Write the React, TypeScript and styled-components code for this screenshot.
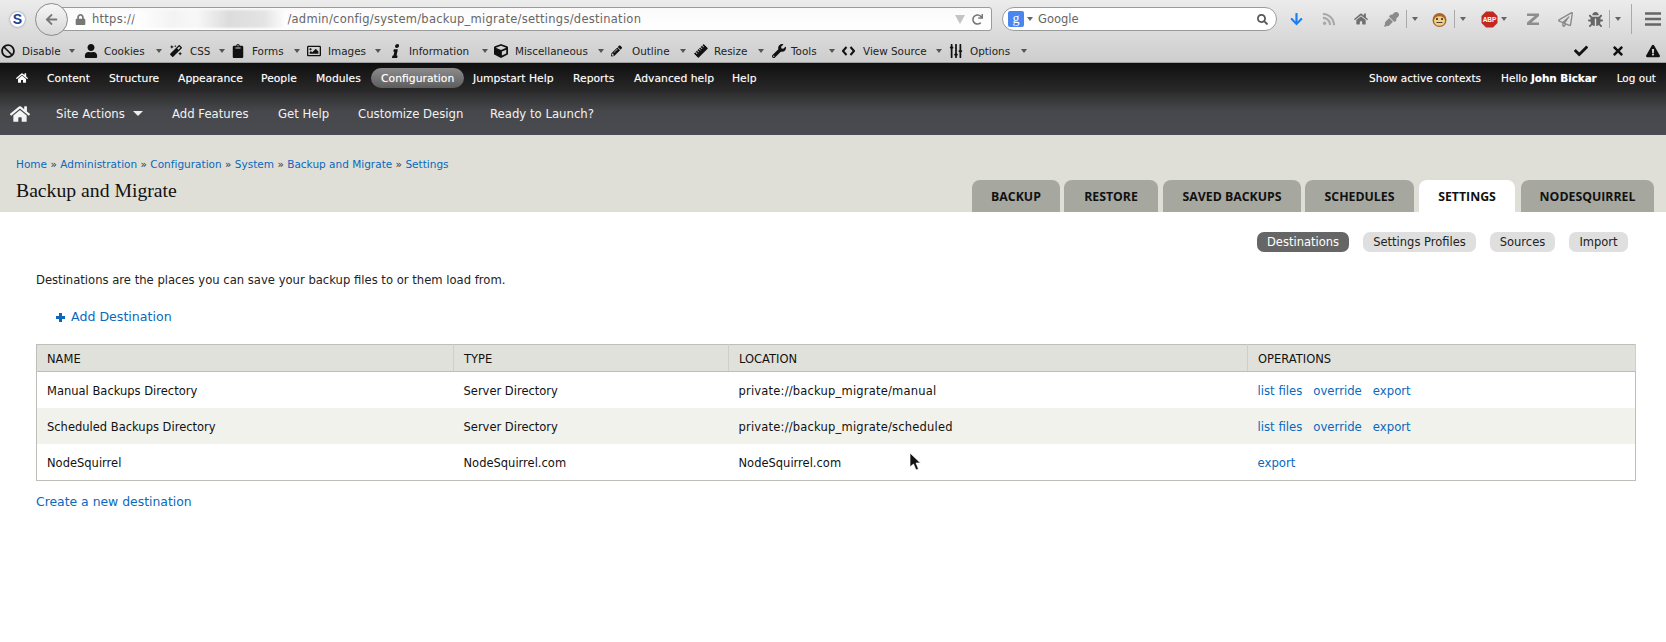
import React from 'react';
import styled, { createGlobalStyle } from 'styled-components';
import {
  FaBan, FaUser, FaMagic, FaClipboard, FaRegImage, FaInfo, FaCube, FaPencilAlt, FaRulerHorizontal,
  FaWrench, FaSlidersH, FaCheck, FaTimes, FaExclamationTriangle, FaHome, FaArrowDown, FaRss,
  FaEyeDropper, FaSearch, FaLock, FaArrowLeft, FaRedo, FaRegPaperPlane, FaBug,
} from 'react-icons/fa';

const Global = createGlobalStyle`
  html, body { margin: 0; padding: 0; background: #fff; }
  body { width: 1666px; height: 642px; overflow: hidden; font-family: "DejaVu Sans", sans-serif; color: #222; }
  a { color: #0a68bd; text-decoration: none; }
`;

const Page = styled.div`position: relative; width: 1666px; height: 642px; overflow: hidden;`;

const Chrome = styled.div`
  height: 63px;
  background: linear-gradient(#ececec, #cdcdcd);
  border-bottom: 1px solid #a0a0a0;
  box-sizing: border-box;
  display: flex;
  flex-direction: column;
`;
const UrlRow = styled.div`height: 38px; display: flex; align-items: center; position: relative; color: #666;`;
const SyncLogo = styled.div`
  width: 15px; height: 15px; margin-left: 10px; border-radius: 50%; background: #fff; color: #1c3f94;
  font: 900 14px/15px "Liberation Sans", sans-serif; text-align: center; box-shadow: 0 0 2px #668;
`;
const BackButton = styled.div`
  width: 31px; height: 31px; margin-left: 10px; border-radius: 50%; border: 1px solid #8a8a8a; z-index: 1;
  background: linear-gradient(#f6f6f6, #d8d8d8); display: flex; align-items: center; justify-content: center;
  color: #777; font-size: 13px; flex: none;
`;
const UrlBar = styled.div`
  width: 932px; height: 24px; margin-left: -8px; box-sizing: border-box; border: 1px solid #9b9b9b; border-radius: 3px;
  background: linear-gradient(#fafafa, #fff); display: flex; align-items: center; padding-left: 14px; font-size: 11.5px;
  color: #666; flex: none;
`;
const UrlText = styled.span<{ $flush?: boolean }>`margin-left: ${p => p.$flush ? 0 : 6}px; letter-spacing: .27px; white-space: nowrap;`;
const Redacted = styled.span`
  width: 152px; height: 18px; flex: none;
  background: linear-gradient(90deg, #fff 0, #f3f3f3 25%, #f8f8f8 40%, #dcdcdc 62%, #e4e4e4 85%, #fff 100%);
  filter: blur(1px);
`;
const Spacer = styled.div`flex: 1;`;
const Marker = styled.span`
  width: 0; height: 0; border-left: 5px solid transparent; border-right: 5px solid transparent;
  border-top: 9px solid #c4c4c4; margin-right: 7px;
`;
const SearchBar = styled.div`
  width: 275px; height: 24px; margin-left: 10px; box-sizing: border-box; border: 1px solid #9b9b9b; border-radius: 12px;
  background: #fff; display: flex; align-items: center; padding: 0 8px 0 5px; font-size: 11.5px; color: #666; flex: none;
`;
const GoogleBadge = styled.span`
  width: 16px; height: 16px; border-radius: 2px; background: #4b85f0; color: #fff; text-align: center;
  font: 14px/16px "Liberation Serif", serif; flex: none;
`;
const TinyCaret = styled.span<{ $color?: string; $m?: string }>`
  width: 0; height: 0; border-left: 3px solid transparent; border-right: 3px solid transparent;
  border-top: 4px solid ${p => p.$color || '#666'}; margin: ${p => p.$m || '0'}; flex: none;
`;
const AddonSlot = styled.span<{ $w: number; $c?: string; $s?: number; $ml?: number }>`
  width: ${p => p.$w}px; flex: none; display: flex; align-items: center; color: ${p => p.$c || '#8b8b8b'};
  font-size: ${p => p.$s || 15}px; margin-left: ${p => p.$ml || 0}px;
`;
const AddonRule = styled.span<{ $h?: number; $m?: string }>`
  width: 1px; height: ${p => p.$h || 18}px; background: #aaa; margin: ${p => p.$m || '0 5px'}; flex: none;
`;

const DevBar = styled.div`height: 24px; display: flex; align-items: center; font-size: 10.4px; color: #222; padding-left: 1px; padding-top: 1px; box-sizing: border-box;`;
const DevItem = styled.div<{ $w: number }>`width: ${p => p.$w}px; flex: none; display: flex; align-items: center; white-space: nowrap;`;
const DevIcon = styled.span<{ $w: number; $gap: number }>`
  width: ${p => p.$w}px; margin-right: ${p => p.$gap}px; flex: none; display: flex; justify-content: center; color: #111; font-size: 14px;
`;
const DevLabel = styled.span<{ $w: number }>`width: ${p => p.$w}px; flex: none;`;
const DevRight = styled.div`margin-left: auto; display: flex; align-items: center; color: #111; font-size: 14px; padding-right: 6px;`;
const DevRightSlot = styled.span<{ $w: number }>`width: ${p => p.$w}px; display: flex; flex: none;`;
const RulerIcon = styled(FaRulerHorizontal)`transform: rotate(-45deg);`;
const SlidersIcon = styled(FaSlidersH)`transform: rotate(90deg);`;
const InfoIcon = styled(FaInfo)`transform: skewX(-12deg);`;

const AdminBar = styled.div`
  height: 29px; background: linear-gradient(#0f0f0f, #2a2a2a); color: #fff; display: flex; align-items: center;
  font-size: 10.8px; padding: 1px 10px 0 16px; box-sizing: border-box; text-shadow: 0 0 1px rgba(255,255,255,.4);
`;
const AdminHome = styled.span`width: 31px; font-size: 12px; display: flex; flex: none;`;
const AdminItem = styled.span<{ $w: number; $active?: boolean }>`
  width: ${p => p.$w}px; flex: none; white-space: nowrap; display: flex; align-items: center;
  ${p => p.$active ? `
    height: 20px; padding-left: 10px; margin-right: 9px; border-radius: 10px;
    background: linear-gradient(#8c8c8c, #5d5d5d);
  ` : ''}
`;
const AdminRight = styled.div`margin-left: auto; display: flex; gap: 20px; font-size: 10.5px;`;
const Strong = styled.strong`font-weight: 700; letter-spacing: -.1px;`;

const SiteBar = styled.div`
  height: 43px; background: linear-gradient(#2d2d2f, #47484c 45%, #4a4b50); color: #f2f2f2; display: flex; align-items: center;
  font-size: 11.7px; padding-left: 10px;
`;
const SiteHome = styled.span`width: 46px; font-size: 20px; display: flex; flex: none; color: #f4f4f4;`;
const SiteItem = styled.span<{ $w: number }>`width: ${p => p.$w}px; flex: none; white-space: nowrap; display: flex; align-items: center;`;
const SiteCaret = styled.span`
  width: 0; height: 0; border-left: 5px solid transparent; border-right: 5px solid transparent; border-top: 5px solid #eee; margin-left: 8px;
`;

const Header = styled.div`
  height: 77px; background: #dfdfd7; box-sizing: border-box; padding: 0 12px 0 16px; display: flex; align-items: flex-end; justify-content: space-between;
`;
const HeaderLeft = styled.div`padding-bottom: 11px;`;
const Crumbs = styled.div`font-size: 10.5px; line-height: 14px; color: #333; margin-bottom: 8px; white-space: nowrap; letter-spacing: .01px;`;
const Title = styled.h1`font: 400 19.7px/22px "Liberation Serif", serif; color: #111; margin: 0;`;
const Tabs = styled.div`display: flex;`;
const Tab = styled.div<{ $w: number; $ml?: number; $active?: boolean }>`
  width: ${p => p.$w}px; margin-left: ${p => p.$ml || 0}px; height: 32px; box-sizing: border-box; border-radius: 8px 8px 0 0; text-align: center;
  font: 700 12.3px/33px "Open Sans", sans-serif; color: #111; background: ${p => p.$active ? '#fff' : '#a6a79f'};
`;

const Content = styled.div`padding: 20px 30px 0 36px;`;
const Pills = styled.div`display: flex; justify-content: flex-end; gap: 14px; padding-right: 8px;`;
const Pill = styled.div<{ $w: number; $active?: boolean }>`
  width: ${p => p.$w}px; height: 20px; border-radius: 7px; text-align: center; font-size: 11.5px; line-height: 20px;
  background: ${p => p.$active ? '#666' : '#dfdfdf'}; color: ${p => p.$active ? '#fff' : '#222'};
`;
const Intro = styled.p`margin: 19px 0 0; font-size: 11.6px; line-height: 18px; color: #222;`;
const AddLink = styled.a`
  display: flex; align-items: center; margin: 19px 0 0 20px; font-size: 12.6px; line-height: 18px;
`;
const PlusIcon = styled.svg`margin-right: 6px; flex: none;`;
const Table = styled.table`
  width: 1600px; margin-top: 18px; border-collapse: collapse; table-layout: fixed; font-size: 11.5px; border: 1px solid #bdbeb8;
`;
const Th = styled.th<{ $w?: number }>`
  ${p => p.$w ? `width: ${p.$w}px;` : ''}
  height: 27px; box-sizing: border-box; padding: 2px 10px 0; text-align: left; font-weight: 400; background: #e1e1db; color: #111;
  border-bottom: 1px solid #bdbeb8; border-right: 1px solid #cfcfc9;
`;
const Tr = styled.tr<{ $even?: boolean }>`background: ${p => p.$even ? '#f2f2ed' : '#fff'};`;
const Td = styled.td<{ $path?: boolean; $tall?: boolean }>`
  height: ${p => p.$tall ? 37 : 36}px; padding: ${p => p.$tall ? 3 : 2}px 10px 0; color: #111; box-sizing: border-box;
  letter-spacing: ${p => p.$path ? '.2px' : '0'};
`;
const Ops = styled.div`display: flex; gap: 11px; font-size: 11.7px;`;
const Create = styled.a`display: block; margin-top: 12px; font-size: 12.4px; line-height: 18px;`;
const Cursor = styled.svg`position: absolute; left: 909px; top: 452px;`;

const CodeGlyph = () => (
  <svg width="13" height="10" viewBox="0 0 13 10"><path d="M4.500 1 1 5l3.500 4M8.500 1 12 5 8.500 9" fill="none" stroke="#111" strokeWidth="2" /></svg>
);

const devItems = [
  { w: 82, i: <FaBan />, iw: 14, gap: 7, l: 'Disable', lw: 47 },
  { w: 87, i: <FaUser />, iw: 15, gap: 6, l: 'Cookies', lw: 52 },
  { w: 62, i: <FaMagic />, iw: 12, gap: 8, l: 'CSS', lw: 29 },
  { w: 75, i: <FaClipboard />, iw: 12, gap: 8, l: 'Forms', lw: 42 },
  { w: 85, i: <FaRegImage />, iw: 14, gap: 7, l: 'Images', lw: 47 },
  { w: 102, i: <InfoIcon />, iw: 8, gap: 9, l: 'Information', lw: 73 },
  { w: 117, i: <FaCube />, iw: 14, gap: 7, l: 'Miscellaneous', lw: 83 },
  { w: 82, i: <FaPencilAlt />, iw: 11, gap: 10, l: 'Outline', lw: 48 },
  { w: 77, i: <RulerIcon />, iw: 15, gap: 6, l: 'Resize', lw: 44 },
  { w: 72, i: <FaWrench />, iw: 17, gap: 4, l: 'Tools', lw: 38 },
  { w: 107, i: <CodeGlyph />, iw: 13, gap: 8, l: 'View Source', lw: 73 },
  { w: 85, i: <SlidersIcon />, iw: 14, gap: 7, l: 'Options', lw: 51 },
];
const admin: [string, number][] = [
  ['Content', 62], ['Structure', 69], ['Appearance', 83], ['People', 55], ['Modules', 55],
];
const admin2: [string, number][] = [
  ['Jumpstart Help', 100], ['Reports', 61], ['Advanced help', 98], ['Help', 30],
];
const rows = [
  ['Manual Backups Directory', 'Server Directory', 'private://backup_migrate/manual', ['list files', 'override', 'export']],
  ['Scheduled Backups Directory', 'Server Directory', 'private://backup_migrate/scheduled', ['list files', 'override', 'export']],
  ['NodeSquirrel', 'NodeSquirrel.com', 'NodeSquirrel.com', ['export']],
] as const;

export default function App() {
  return (
    <Page>
      <Global />
      <Chrome>
        <UrlRow>
          <SyncLogo>S</SyncLogo>
          <BackButton><FaArrowLeft /></BackButton>
          <UrlBar>
            <FaLock size={11} color="#777" />
            <UrlText>https://</UrlText>
            <Redacted />
            <UrlText $flush>/admin/config/system/backup_migrate/settings/destination</UrlText>
            <Spacer />
            <Marker />
            <AddonSlot $w={19} $c="#777" $s={11}><FaRedo /></AddonSlot>
          </UrlBar>
          <SearchBar>
            <GoogleBadge>g</GoogleBadge>
            <TinyCaret $m="0 5px 0 3px" />
            Google
            <Spacer />
            <FaSearch size={11} color="#555" />
          </SearchBar>
          <AddonSlot $w={13} $c="#1d7fee" $s={14} $ml={13}><FaArrowDown /></AddonSlot>
          <AddonSlot $w={14} $c="#a9a9a9" $s={14} $ml={19}><FaRss /></AddonSlot>
          <AddonSlot $w={14} $c="#707070" $s={14} $ml={18}><FaHome /></AddonSlot>
          <AddonSlot $w={17} $ml={16}><FaEyeDropper /></AddonSlot>
          <AddonRule />
          <TinyCaret $m="0 14px 0 0" />
          <AddonSlot $w={15}>
            <svg width="15" height="15" viewBox="0 0 15 15"><circle cx="7.5" cy="8" r="7" fill="#a8642a" /><ellipse cx="7.5" cy="9" rx="5.5" ry="4.8" fill="#f3cf83" /><circle cx="5" cy="7" r="1" fill="#222" /><circle cx="10" cy="7" r="1" fill="#222" /><path d="M4.5 10.5h6" stroke="#444" /></svg>
          </AddonSlot>
          <AddonRule $m="0 5px 0 7px" />
          <TinyCaret $m="0 15px 0 0" />
          <AddonSlot $w={17}>
            <svg width="17" height="17" viewBox="0 0 17 17"><path d="M5 .5h7L16.500 5v7L12 16.500H5L.5 12V5z" fill="#c5281f" /><text x="8.500" y="11" fontSize="6.500" fontWeight="700" fill="#fff" textAnchor="middle" fontFamily="Liberation Sans">ABP</text></svg>
          </AddonSlot>
          <TinyCaret $m="0 19px 0 3px" />
          <AddonSlot $w={14}>
            <svg width="14" height="14" viewBox="0 0 14 14"><path d="M1 1.500h12v2.500l-7.500 6.500H13V13H1v-2.500L8.500 4H1z" fill="#8e8e8e" /></svg>
          </AddonSlot>
          <AddonSlot $w={15} $ml={18}><FaRegPaperPlane /></AddonSlot>
          <AddonSlot $w={16} $ml={15} $c="#666"><FaBug /></AddonSlot>
          <AddonRule />
          <TinyCaret $m="0 10px 0 0" />
          <AddonRule $h={30} $m="0 13px 0 0" />
          <svg width="16" height="14" viewBox="0 0 16 14"><path d="M0 1.500h16M0 7h16M0 12.500h16" stroke="#666" strokeWidth="2.600" /></svg>
        </UrlRow>
        <DevBar>
          {devItems.map(d => (
            <DevItem key={d.l} $w={d.w}>
              <DevIcon $w={d.iw} $gap={d.gap}>{d.i}</DevIcon>
              <DevLabel $w={d.lw}>{d.l}</DevLabel>
              <TinyCaret $color="#555" />
            </DevItem>
          ))}
          <DevRight>
            <DevRightSlot $w={37}><FaCheck /></DevRightSlot>
            <DevRightSlot $w={35}><FaTimes /></DevRightSlot>
            <DevRightSlot $w={14}><FaExclamationTriangle /></DevRightSlot>
          </DevRight>
        </DevBar>
      </Chrome>
      <AdminBar>
        <AdminHome><FaHome /></AdminHome>
        {admin.map(([t, w]) => <AdminItem key={t} $w={w}>{t}</AdminItem>)}
        <AdminItem $w={83} $active>Configuration</AdminItem>
        {admin2.map(([t, w]) => <AdminItem key={t} $w={w}>{t}</AdminItem>)}
        <AdminRight>
          <span>Show active contexts</span>
          <span>Hello <Strong>John Bickar</Strong></span>
          <span>Log out</span>
        </AdminRight>
      </AdminBar>
      <SiteBar>
        <SiteHome><FaHome /></SiteHome>
        <SiteItem $w={116}>Site Actions<SiteCaret /></SiteItem>
        <SiteItem $w={106}>Add Features</SiteItem>
        <SiteItem $w={80}>Get Help</SiteItem>
        <SiteItem $w={132}>Customize Design</SiteItem>
        <SiteItem $w={110}>Ready to Launch?</SiteItem>
      </SiteBar>
      <Header>
        <HeaderLeft>
          <Crumbs>
            <a href="#">Home</a> » <a href="#">Administration</a> » <a href="#">Configuration</a> » <a href="#">System</a> » <a href="#">Backup and Migrate</a> » <a href="#">Settings</a>
          </Crumbs>
          <Title>Backup and Migrate</Title>
        </HeaderLeft>
        <Tabs>
          <Tab $w={88}>BACKUP</Tab>
          <Tab $w={94} $ml={4}>RESTORE</Tab>
          <Tab $w={138} $ml={5}>SAVED BACKUPS</Tab>
          <Tab $w={109} $ml={4}>SCHEDULES</Tab>
          <Tab $w={96} $ml={5} $active>SETTINGS</Tab>
          <Tab $w={133} $ml={6}>NODESQUIRREL</Tab>
        </Tabs>
      </Header>
      <Content>
        <Pills>
          <Pill $w={92} $active>Destinations</Pill>
          <Pill $w={113}>Settings Profiles</Pill>
          <Pill $w={65}>Sources</Pill>
          <Pill $w={59}>Import</Pill>
        </Pills>
        <Intro>Destinations are the places you can save your backup files to or them load from.</Intro>
        <AddLink href="#">
          <PlusIcon width="9" height="9" viewBox="0 0 9 9"><path d="M3 0h3v3h3v3H6v3H3V6H0V3h3z" fill="#0a68bd" /></PlusIcon>
          Add Destination
        </AddLink>
        <Table>
          <thead>
            <tr>
              <Th $w={417}>NAME</Th>
              <Th $w={275}>TYPE</Th>
              <Th $w={519}>LOCATION</Th>
              <Th>OPERATIONS</Th>
            </tr>
          </thead>
          <tbody>
            {rows.map((r, i) => (
              <Tr key={r[0]} $even={i === 1}>
                <Td $tall={i === 2}>{r[0]}</Td>
                <Td $tall={i === 2}>{r[1]}</Td>
                <Td $tall={i === 2} $path={i < 2}>{r[2]}</Td>
                <Td $tall={i === 2}><Ops>{r[3].map(o => <a key={o} href="#">{o}</a>)}</Ops></Td>
              </Tr>
            ))}
          </tbody>
        </Table>
        <Create href="#">Create a new destination</Create>
      </Content>
      <Cursor width="12" height="19" viewBox="0 0 12 19"><path d="M1 1v14l3.500-3 2.500 6 2.500-1-2.500-6h4.500z" fill="#111" stroke="#fff" strokeWidth=".7" /></Cursor>
    </Page>
  );
}
